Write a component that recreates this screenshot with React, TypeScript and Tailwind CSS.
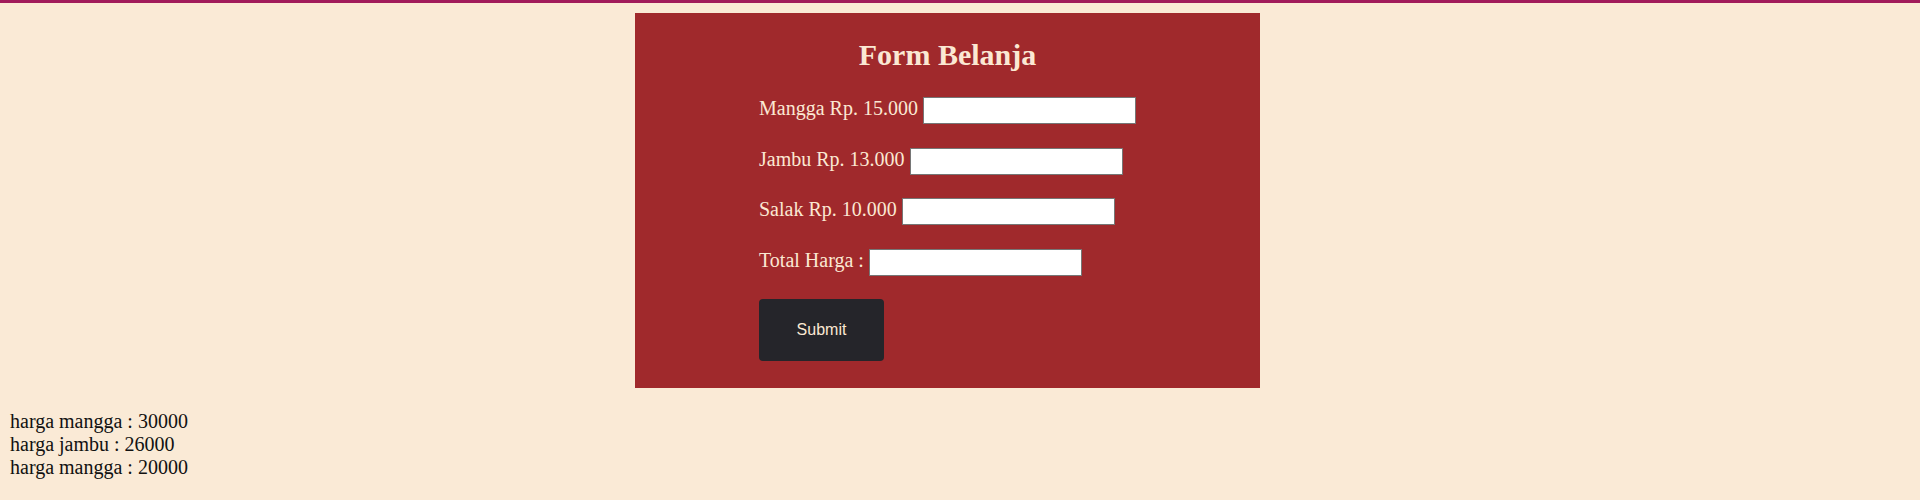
import React from "react";

const ITEMS = [
  { label: "Mangga Rp. 15.000" },
  { label: "Jambu Rp. 13.000" },
  { label: "Salak Rp. 10.000" },
  { label: "Total Harga :" },
];

export default function App() {
  return (
    <div className="min-h-screen w-full bg-[#faead6] border-t-[3px] border-[#a11b5b] font-['Liberation_Serif',serif] text-[20px] text-[#111]">
      {/* form card */}
      <div className="ml-[635px] mt-[10px] w-[625px] bg-[#a0292c] pt-[25px] pb-[27px] pl-[124px] text-[#fbe8d3]">
        <h1 className="-ml-[124px] text-center text-[30px] leading-[34px] font-bold">Form Belanja</h1>

        <div className="mt-[25px] flex flex-col gap-[23.5px]">
          {ITEMS.map((item) => (
            <div key={item.label} className="flex items-center gap-[5px] h-[27px]">
              <label className="leading-[23px] -mt-[4px]">{item.label}</label>
              <input
                type="text"
                className="w-[213px] h-[27px] bg-white border border-[#767676] text-black text-[14px] px-1 outline-none"
              />
            </div>
          ))}
        </div>

        <button className="mt-[23px] w-[125px] h-[62px] rounded-[4px] bg-[#25252a] text-[16px] font-['Liberation_Sans',Arial,sans-serif] text-[#fbe8d3]">
          Submit
        </button>
      </div>

      {/* result */}
      <div className="mt-[22px] pl-[10px] leading-[23px]">
        <div>harga mangga : 30000</div>
        <div>harga jambu : 26000</div>
        <div>harga mangga : 20000</div>
      </div>
    </div>
  );
}
